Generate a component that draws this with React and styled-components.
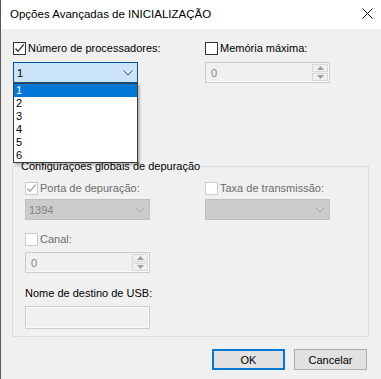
import React from "react";
import styled, { createGlobalStyle } from "styled-components";

const GlobalStyle = createGlobalStyle`
  html, body { margin: 0; padding: 0; background: #f0f0f0; }
  body {
    font-family: "Liberation Sans", Arial, sans-serif;
    font-size: 11px;
    color: #000;
  }
  * { box-sizing: border-box; }
`;

const Window = styled.div`
  width: 381px;
  height: 379px;
  border-left: 1px solid #5a5a5a;
  background: #f0f0f0;
  display: flex;
  flex-direction: column;
  overflow: hidden;
`;

const TitleBar = styled.div`
  height: 29px;
  flex: none;
  background: #fff;
  display: flex;
  align-items: center;
  justify-content: space-between;
  padding: 0 8px 2px 9px;
  font-size: 11.5px;
`;

const Body = styled.div`
  padding: 13px 0 0 11px;
  display: flex;
  flex-direction: column;
`;

const TopGrid = styled.div`
  display: grid;
  grid-template-columns: 125px 125px;
  column-gap: 67px;
  padding-left: 1px;
`;

const Field = styled.div`
  display: flex;
  flex-direction: column;
  gap: ${(p) => p.$gap || 7}px;
`;

const CheckRow = styled.label`
  display: flex;
  align-items: center;
  gap: 2px;
  height: 13px;
  line-height: 13px;
  color: ${(p) => (p.$disabled ? "#6d6d6d" : "#000")};
  white-space: nowrap;
`;

const Box = styled.span`
  width: 13px;
  height: 13px;
  flex: none;
  background: #fff;
  border: 1px solid ${(p) => (p.$disabled ? "#cccccc" : "#333333")};
  display: flex;
  align-items: center;
  justify-content: center;
`;

const SelectWrap = styled.div`
  position: relative;
  width: 125px;
`;

const SelectBox = styled.div`
  height: 21px;
  display: flex;
  align-items: center;
  justify-content: space-between;
  padding: 0 4px 0 3px;
  background: ${(p) => (p.$disabled ? "#cccccc" : "#cce4f7")};
  border: 1px solid ${(p) => (p.$disabled ? "#bfbfbf" : "#005499")};
  color: ${(p) => (p.$disabled ? "#838383" : "#000")};
`;

const DropList = styled.ul`
  position: absolute;
  top: 21px;
  left: 0;
  width: 125px;
  margin: 0;
  padding: 0;
  list-style: none;
  background: #fff;
  border: 1px solid #3c3c3c;
  box-shadow: 2px 2px 2px rgba(0, 0, 0, 0.25);
  z-index: 2;
`;

const DropItem = styled.li`
  height: 13px;
  line-height: 13px;
  padding-left: 2px;
  background: ${(p) => (p.$active ? "#0078d7" : "#fff")};
  color: ${(p) => (p.$active ? "#fff" : "#000")};
`;

const SpinBox = styled.div`
  width: 125px;
  height: 21px;
  display: flex;
  border: 1px solid #cccccc;
  background: #f0f0f0;
  box-shadow: inset -1px -1px 0 #fafafa;
`;

const SpinValue = styled.div`
  flex: 1;
  display: flex;
  align-items: center;
  padding-left: 5px;
  color: #838383;
`;

const SpinButtons = styled.div`
  width: 17px;
  display: flex;
  flex-direction: column;
  gap: 1px;
  padding: 1px 1px 1px 0;
`;

const SpinButton = styled.div`
  flex: 1;
  border: 1px solid #d9d9d9;
  background: #f0f0f0;
  display: flex;
  align-items: center;
  justify-content: center;
`;

const Group = styled.fieldset`
  margin: 76px 0 0 0;
  width: 357px;
  border: 1px solid #dcdcdc;
  padding: 9px 12px 7px 12px;
`;

const Legend = styled.legend`
  margin-left: -5px;
  padding: 0 1px;
  line-height: 14px;
  font-size: 11px;
`;

const GroupGrid = styled.div`
  display: grid;
  grid-template-columns: 125px 125px;
  column-gap: 55px;
  row-gap: 13px;
`;

const PlainLabel = styled.div`
  height: 13px;
  line-height: 13px;
  color: #000;
  margin-top: 1px;
  white-space: nowrap;
`;

const TextBox = styled.div`
  width: 125px;
  height: 23px;
  border: 1px solid #cccccc;
  background: #f0f0f0;
  box-shadow: inset 1px 1px 0 #fafafa, inset -1px -1px 0 #fafafa;
`;

const ButtonRow = styled.div`
  display: flex;
  justify-content: flex-end;
  gap: 9px;
  margin-top: 12px;
  padding-right: 14px;
`;

const Button = styled.button`
  width: 73px;
  height: 21px;
  padding: 0;
  font-family: inherit;
  font-size: 11px;
  color: #000;
  background: #e1e1e1;
  border: ${(p) => (p.$primary ? "2px solid #0078d7" : "1px solid #adadad")};
`;

const Check = ({ checked, disabled }) => (
  <Box $disabled={disabled}>
    {checked && (
      <svg width="11" height="11" viewBox="0 0 11 11">
        <polyline
          points="1.5,5.5 4,8.3 9.7,1.5"
          fill="none"
          stroke={disabled ? "#a3a3a3" : "#333"}
          strokeWidth="1.3"
        />
      </svg>
    )}
  </Box>
);

const Chevron = ({ color }) => (
  <svg width="10" height="6" viewBox="0 0 10 6">
    <polyline points="0.5,0.5 5,5 9.5,0.5" fill="none" stroke={color} strokeWidth="1" />
  </svg>
);

const Arrow = ({ up }) => (
  <svg width="7" height="4" viewBox="0 0 7 4">
    <polygon points={up ? "0,4 3.5,0 7,4" : "0,0 3.5,4 7,0"} fill="#a0a0a0" />
  </svg>
);

const Spin = ({ value }) => (
  <SpinBox>
    <SpinValue>{value}</SpinValue>
    <SpinButtons>
      <SpinButton><Arrow up /></SpinButton>
      <SpinButton><Arrow /></SpinButton>
    </SpinButtons>
  </SpinBox>
);

export default function App() {
  const items = ["1", "2", "3", "4", "5", "6"];
  return (
    <>
      <GlobalStyle />
      <Window>
        <TitleBar>
          <span>Opções Avançadas de INICIALIZAÇÃO</span>
          <svg width="11" height="11" viewBox="0 0 11 11">
            <path d="M0.5 0.5 L10.5 10.5 M10.5 0.5 L0.5 10.5" stroke="#111" strokeWidth="1" />
          </svg>
        </TitleBar>
        <Body>
          <TopGrid>
            <Field>
              <CheckRow>
                <Check checked />
                Número de processadores:
              </CheckRow>
              <SelectWrap>
                <SelectBox>
                  <span>1</span>
                  <Chevron color="#505050" />
                </SelectBox>
                <DropList>
                  {items.map((n, i) => (
                    <DropItem key={n} $active={i === 0}>{n}</DropItem>
                  ))}
                </DropList>
              </SelectWrap>
            </Field>
            <Field>
              <CheckRow>
                <Check />
                Memória máxima:
              </CheckRow>
              <Spin value="0" />
            </Field>
          </TopGrid>

          <Group>
            <Legend>Configurações globais de depuração</Legend>
            <GroupGrid>
              <Field $gap={4}>
                <CheckRow $disabled>
                  <Check checked disabled />
                  Porta de depuração:
                </CheckRow>
                <SelectBox $disabled>
                  <span>1394</span>
                  <Chevron color="#a8a8a8" />
                </SelectBox>
              </Field>
              <Field $gap={4}>
                <CheckRow $disabled>
                  <Check disabled />
                  Taxa de transmissão:
                </CheckRow>
                <SelectBox $disabled>
                  <span />
                  <Chevron color="#a8a8a8" />
                </SelectBox>
              </Field>
              <Field $gap={6}>
                <CheckRow $disabled>
                  <Check disabled />
                  Canal:
                </CheckRow>
                <Spin value="0" />
              </Field>
              <span />
              <Field $gap={6}>
                <PlainLabel>Nome de destino de USB:</PlainLabel>
                <TextBox />
              </Field>
            </GroupGrid>
          </Group>

          <ButtonRow>
            <Button $primary>OK</Button>
            <Button>Cancelar</Button>
          </ButtonRow>
        </Body>
      </Window>
    </>
  );
}
